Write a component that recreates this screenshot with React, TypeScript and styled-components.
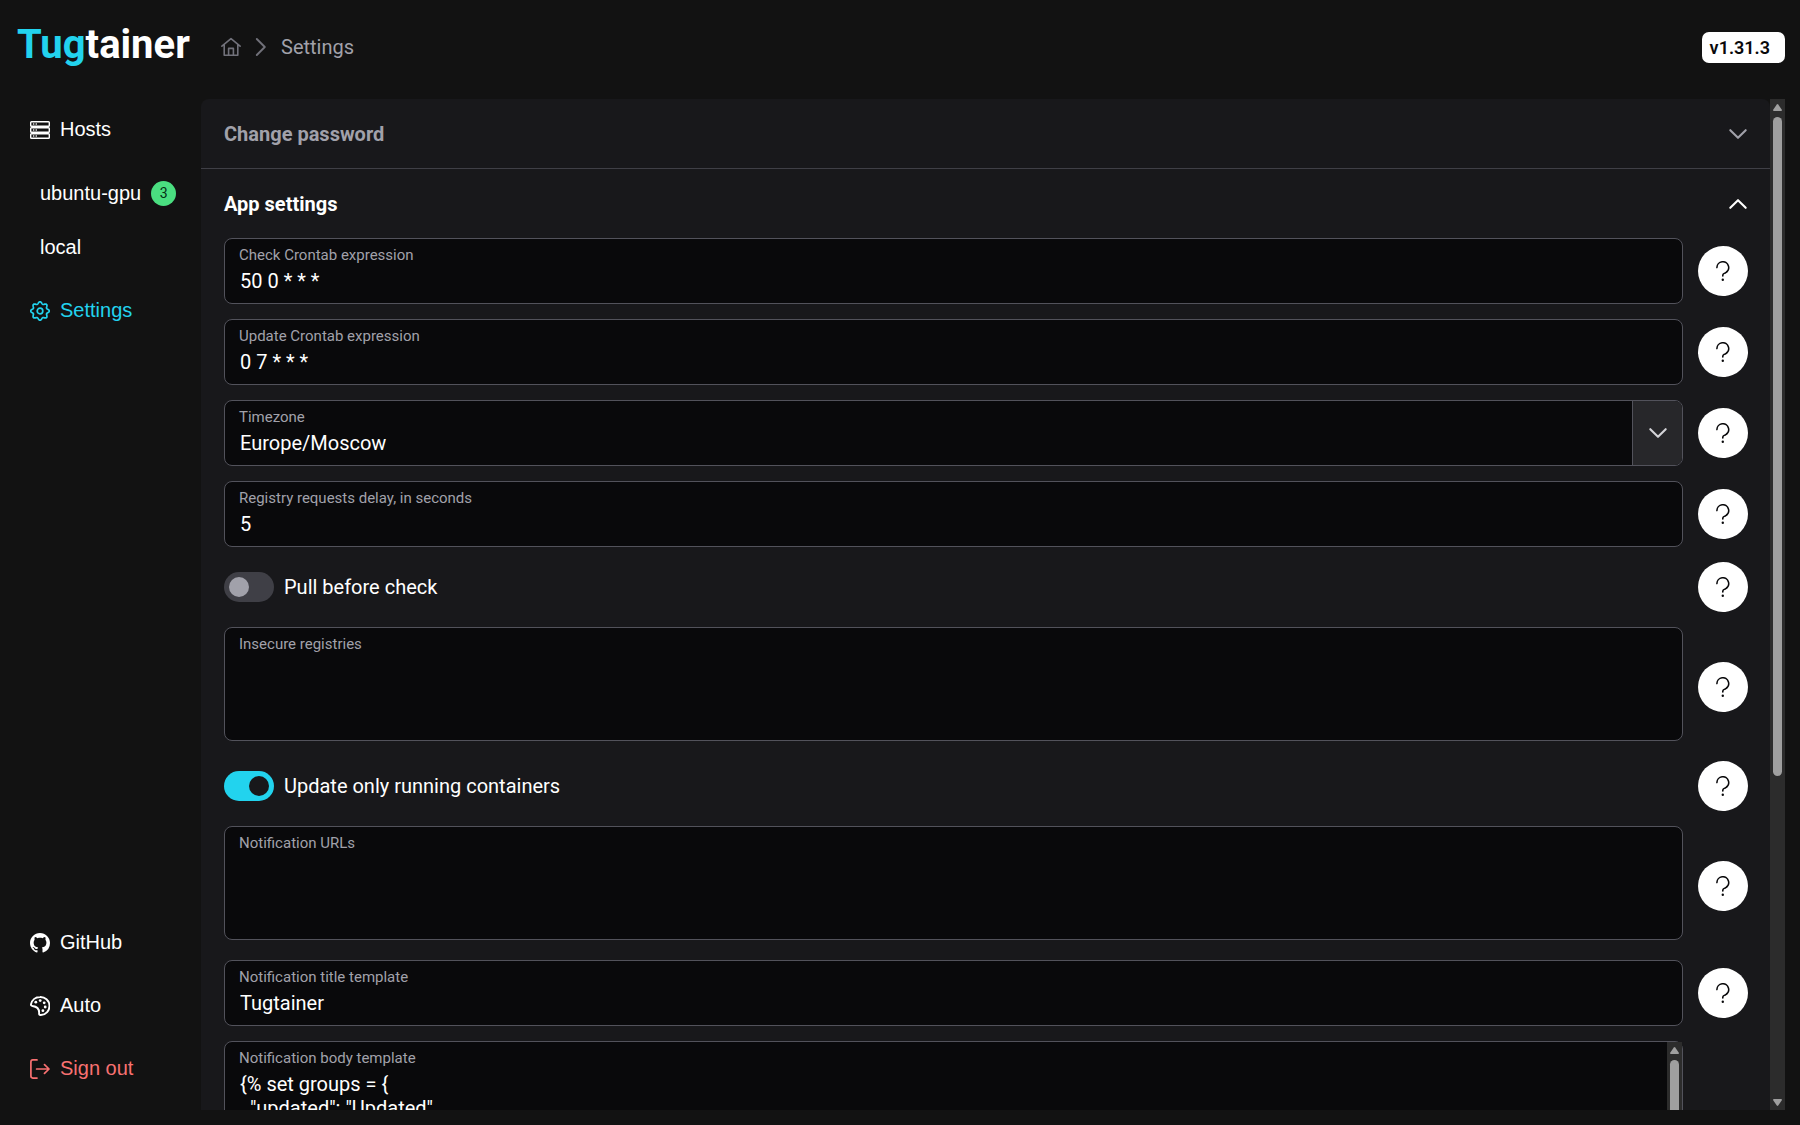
import React, { useId, useState } from "react";
import styled, { createGlobalStyle, css } from "styled-components";
import { BsGithub } from "react-icons/bs";

const color = {
  page: "#121212",
  panel: "#18181b",
  field: "#09090b",
  fieldBorder: "#52525b",
  divider: "#3f3f46",
  raised: "#27272a",
  text: "#ffffff",
  muted: "#a1a1aa",
  crumb: "#71717a",
  primary: "#22d3ee",
  success: "#4ade80",
  danger: "#f87171",
  track: "#2c2c2c",
  thumb: "#9f9f9f",
};

const GlobalStyle = createGlobalStyle`
  *, *::before, *::after { box-sizing: border-box; }
  body {
    margin: 0;
    background: ${color.page};
    color: ${color.text};
    font-family: Roboto, "Liberation Sans", sans-serif;
    font-size: 20px;
    line-height: 24px;
  }
  button, input, select, textarea { font: inherit; color: inherit; margin: 0; }
`;

const Page = styled.div`
  display: flex;
  flex-direction: column;
  height: 100vh;
  padding: 0 15px 15px 0;
`;

const Header = styled.header`
  display: flex;
  align-items: center;
  flex: none;
  height: 99px;
  padding: 0 0 5px 17px;
`;

const Logo = styled.a`
  width: 204px;
  padding-bottom: 4px;
  font-size: 40px;
  line-height: 48px;
  font-weight: 700;
  color: ${color.text};
  text-decoration: none;
`;

const LogoAccent = styled.span`
  color: ${color.primary};
`;

const Breadcrumb = styled.nav`
  display: flex;
  align-items: center;
  gap: 10px;
  color: ${color.crumb};
`;

const CrumbLink = styled.a`
  display: flex;
  color: inherit;
`;

const CrumbText = styled.span`
  color: ${color.muted};
`;

const Version = styled.span`
  margin-left: auto;
  padding: 4px 15px 3px 8px;
  border-radius: 7px;
  background: #ffffff;
  color: #09090b;
  font-size: 18px;
  font-weight: 600;
`;

const Body = styled.div`
  display: flex;
  flex: 1;
  min-height: 0;
`;

const Sidebar = styled.aside`
  display: flex;
  flex-direction: column;
  justify-content: space-between;
  flex: none;
  width: 201px;
  padding-bottom: 9px;
  font-family: "Liberation Sans", Arial, sans-serif;
`;

const Menu = styled.ul`
  margin: 0;
  padding: 0;
  list-style: none;
`;

const SubMenu = styled(Menu)`
  padding: 4px 0 6px;
`;

const menuEntry = css`
  display: flex;
  align-items: center;
  gap: 10px;
  width: 100%;
  border: 0;
  background: none;
  text-align: left;
  text-decoration: none;
  cursor: pointer;
`;

const iconEntry = css`
  ${menuEntry}
  height: 63px;
  padding: 0 0 4px 30px;

  svg {
    flex: none;
    margin-top: 2px;
  }
`;

const MenuLink = styled.a<{ $active?: boolean }>`
  ${iconEntry}
  color: ${(p) => (p.$active ? color.primary : color.text)};
`;

const MenuButton = styled.button<{ $danger?: boolean }>`
  ${iconEntry}
  color: ${(p) => (p.$danger ? color.danger : color.text)};
`;

const SubLink = styled.a`
  ${menuEntry}
  height: 54px;
  padding-left: 40px;
  color: ${color.text};
`;

const CountBadge = styled.span`
  display: grid;
  place-items: center;
  width: 25px;
  height: 25px;
  border-radius: 50%;
  background: ${color.success};
  color: #052e16;
  font-family: Roboto, sans-serif;
  font-size: 14px;
`;

const Main = styled.main`
  display: flex;
  flex: 1;
  min-width: 0;
`;

const Scroller = styled.div`
  flex: 1;
  min-width: 0;
  overflow-y: auto;
  scrollbar-width: none;
  border-radius: 8px 8px 0 0;
  background: ${color.panel};
`;

const Section = styled.section`
  & + & {
    border-top: 1px solid ${color.divider};
  }
`;

const SectionTitle = styled.h2`
  margin: 0;
  font-size: 20px;
`;

const SectionToggle = styled.button<{ $open: boolean }>`
  display: flex;
  align-items: center;
  justify-content: space-between;
  width: 100%;
  height: 69px;
  padding: 0 22px 0 23px;
  border: 0;
  background: none;
  color: ${(p) => (p.$open ? color.text : color.muted)};
  font-weight: 700;
  cursor: pointer;
`;

const Form = styled.form`
  display: flex;
  flex-direction: column;
  gap: 15px;
  padding: 0 22px 22px 23px;
`;

const Row = styled.div`
  display: flex;
  align-items: center;
  gap: 15px;
`;

const Field = styled.div<{ $multiline?: boolean }>`
  position: relative;
  display: flex;
  flex: 1;
  min-width: 0;
  padding-bottom: ${(p) => (p.$multiline ? 5 : 0)}px;
`;

const FieldLabel = styled.label`
  position: absolute;
  top: 8px;
  left: 15px;
  font-size: 15px;
  line-height: 18px;
  color: ${color.muted};
`;

const control = css`
  display: block;
  width: 100%;
  padding: 30px 15px 10px;
  border: 1px solid ${color.fieldBorder};
  border-radius: 8px;
  outline: 0;
  background: ${color.field};
  line-height: 24px;
`;

const TextInput = styled.input`
  ${control}
  height: 66px;
`;

const TextArea = styled.textarea`
  ${control}
  resize: none;
  overflow: hidden;
`;

const Select = styled.select`
  ${control}
  height: 66px;
  appearance: none;
`;

const SelectTrigger = styled.span`
  position: absolute;
  top: 1px;
  right: 1px;
  bottom: 1px;
  display: grid;
  place-items: center;
  width: 50px;
  border-left: 1px solid ${color.fieldBorder};
  border-radius: 0 7px 7px 0;
  background: ${color.raised};
  color: #d4d4d8;
  pointer-events: none;
`;

const EditorBox = styled.div`
  position: relative;
  display: flex;
  flex: 1;
  min-width: 0;
  border: 1px solid ${color.fieldBorder};
  border-radius: 8px;
  background: ${color.field};

  ${TextArea} {
    border: 0;
    background: none;
  }
  ${FieldLabel} {
    top: 7px;
    left: 14px;
  }
`;

const HelpButton = styled.button`
  display: grid;
  place-items: center;
  flex: none;
  width: 50px;
  height: 50px;
  padding: 0;
  border: 0;
  border-radius: 50%;
  background: #ffffff;
  color: #09090b;
  cursor: pointer;
`;

const HelpSpacer = styled.div`
  flex: none;
  width: 50px;
`;

const SwitchField = styled.label`
  display: flex;
  align-items: center;
  gap: 10px;
  flex: 1;
  cursor: pointer;
`;

const Switch = styled.input`
  appearance: none;
  display: flex;
  align-items: center;
  width: 50px;
  height: 30px;
  padding: 5px;
  border-radius: 15px;
  background: ${color.divider};

  &::before {
    content: "";
    width: 20px;
    height: 20px;
    border-radius: 50%;
    background: ${color.muted};
  }
  &:checked {
    justify-content: flex-end;
    background: ${color.primary};
  }
  &:checked::before {
    background: ${color.panel};
  }
`;

const ScrollBar = styled.div`
  display: flex;
  flex-direction: column;
  align-items: center;
  justify-content: space-between;
  flex: none;
  width: 15px;
  padding: 5px 0 4px;
  background: ${color.track};
`;

const ScrollTrack = styled.div`
  flex: 1;
  width: 9px;
  margin: 6px 0;
`;

const ScrollThumb = styled.div<{ $share: number }>`
  height: ${(p) => p.$share}%;
  border-radius: 5px;
  background: ${color.thumb};
`;

const svgBase = {
  fill: "none",
  stroke: "currentColor",
  strokeLinecap: "round",
  strokeLinejoin: "round",
  "aria-hidden": true,
} as const;

const HomeIcon = () => (
  <svg width="20" height="20" viewBox="0 0 20 20" strokeWidth="1.6" {...svgBase}>
    <path d="M.9 9.2 10 1.6l9.1 7.6M3.2 7.6v10.6h13.6V7.6M7.6 18v-6.6h4.8V18" />
  </svg>
);

const CrumbChevron = () => (
  <svg width="20" height="20" viewBox="0 0 20 20" strokeWidth="1.9" {...svgBase}>
    <path d="m5.8 2 8 8-8 8" />
  </svg>
);

const Chevron = ({ up = false }: { up?: boolean }) => (
  <svg width="20" height="20" viewBox="0 0 20 20" strokeWidth="2.1" {...svgBase}>
    <path d={up ? "m2.3 13.8 7.7-7.6 7.7 7.6" : "m2.3 6.2 7.7 7.6 7.7-7.6"} />
  </svg>
);

const HelpIcon = () => (
  <svg width="20" height="20" viewBox="0 0 20 20" strokeWidth="1.6" {...svgBase}>
    <path d="M3.9 6.6a5.9 5.9 0 1 1 8.2 5.5c-1.5.5-2.3.9-2.3 2V15" />
    <circle cx="9.8" cy="18.8" r="1.2" fill="currentColor" stroke="none" />
  </svg>
);

const HostsIcon = () => (
  <svg width="20" height="20" viewBox="0 0 20 20" {...svgBase}>
    <g strokeWidth="1.4">
      <rect x=".7" y="1.7" width="18.6" height="4.6" rx=".8" />
      <rect x=".7" y="7.7" width="18.6" height="4.6" rx=".8" />
      <rect x=".7" y="13.7" width="18.6" height="4.6" rx=".8" />
    </g>
    <path strokeWidth="1.6" d="M3.6 4h.1M6.2 4h.1M3.6 10h.1M6.2 10h.1M3.6 16h.1M6.2 16h.1" />
  </svg>
);

const gearOutline = Array.from({ length: 96 }, (_, i) => {
  const angle = (i / 96) * Math.PI * 2;
  const radius = 8.2 + 1.1 * Math.cos(8 * angle);
  return `${(10 + radius * Math.cos(angle)).toFixed(2)},${(10 + radius * Math.sin(angle)).toFixed(2)}`;
}).join(" ");

const GearIcon = () => (
  <svg width="20" height="20" viewBox="0 0 20 20" strokeWidth="1.7" {...svgBase}>
    <polygon points={gearOutline} />
    <circle cx="10" cy="10" r="2.8" />
  </svg>
);

const PaletteIcon = () => (
  <svg width="20" height="20" viewBox="0 0 20 20" strokeWidth="1.9" {...svgBase}>
    <path d="M1 8.2C2 3.900 5.600 1 10 1a9 9 0 0 1 .9 18c-1.600.2-1.900-.4-1.800-1.800.3-4.300-2.200-6.600-6.600-7.200C1.300 9.800.8 9.300 1 8.200z" />
    <g fill="currentColor" stroke="none">
      <circle cx="5.8" cy="6.2" r="1.4" />
      <circle cx="10.200" cy="4.600" r="1.400" />
      <circle cx="14.200" cy="6.800" r="1.400" />
      <circle cx="15.200" cy="11" r="1.400" />
      <circle cx="12.900" cy="14.700" r="1.400" />
    </g>
  </svg>
);

const SignOutIcon = () => (
  <svg width="20" height="20" viewBox="0 0 20 20" strokeWidth="1.7" {...svgBase}>
    <path d="M7 .9H2.800A2 2 0 0 0 .9 2.900v14.200a2 2 0 0 0 1.900 2H7M6.600 10h12.300M14.500 5.600l4.500 4.400-4.500 4.400" />
  </svg>
);

const ArrowTip = ({ down = false }: { down?: boolean }) => (
  <svg width="9" height="7" viewBox="0 0 9 7" fill={color.thumb} aria-hidden>
    <path d={down ? "M0 1Q0 0 1 0h7q1 0 1 1L5.2 6.5q-.7.8-1.4 0z" : "M0 6q0 1 1 1h7q1 0 1-1L5.2.5q-.7-.8-1.4 0z"} />
  </svg>
);

const Bar = ({ share }: { share: number }) => (
  <ScrollBar aria-hidden>
    <ArrowTip />
    <ScrollTrack>
      <ScrollThumb $share={share} />
    </ScrollTrack>
    <ArrowTip down />
  </ScrollBar>
);

const Help = ({ topic }: { topic: string }) => (
  <HelpButton type="button" aria-label={`Help: ${topic}`}>
    <HelpIcon />
  </HelpButton>
);

const InputRow = ({ label, value }: { label: string; value: string }) => {
  const id = useId();
  return (
    <Row>
      <Field>
        <TextInput id={id} defaultValue={value} />
        <FieldLabel htmlFor={id}>{label}</FieldLabel>
      </Field>
      <Help topic={label} />
    </Row>
  );
};

const SelectRow = ({ label, options }: { label: string; options: string[] }) => {
  const id = useId();
  return (
    <Row>
      <Field>
        <Select id={id}>
          {options.map((o) => (
            <option key={o}>{o}</option>
          ))}
        </Select>
        <FieldLabel htmlFor={id}>{label}</FieldLabel>
        <SelectTrigger>
          <Chevron />
        </SelectTrigger>
      </Field>
      <Help topic={label} />
    </Row>
  );
};

const AreaRow = ({ label }: { label: string }) => {
  const id = useId();
  return (
    <Row>
      <Field $multiline>
        <TextArea id={id} rows={3} />
        <FieldLabel htmlFor={id}>{label}</FieldLabel>
      </Field>
      <Help topic={label} />
    </Row>
  );
};

const SwitchRow = ({ label, on }: { label: string; on?: boolean }) => (
  <Row>
    <SwitchField>
      <Switch type="checkbox" role="switch" defaultChecked={on} />
      {label}
    </SwitchField>
    <Help topic={label} />
  </Row>
);

const EditorRow = ({ label, value }: { label: string; value: string }) => {
  const id = useId();
  return (
    <Row>
      <EditorBox>
        <TextArea id={id} rows={8} defaultValue={value} />
        <FieldLabel htmlFor={id}>{label}</FieldLabel>
        <Bar share={70} />
      </EditorBox>
      <HelpSpacer />
    </Row>
  );
};

const bodyTemplate = `{% set groups = {
  "updated": "Updated"
} %}`;

export default function App() {
  const [open, setOpen] = useState(true);
  return (
    <>
      <GlobalStyle />
      <Page>
        <Header>
          <Logo href="#">
            <LogoAccent>Tug</LogoAccent>tainer
          </Logo>
          <Breadcrumb aria-label="Breadcrumb">
            <CrumbLink href="#" aria-label="Home">
              <HomeIcon />
            </CrumbLink>
            <CrumbChevron />
            <CrumbText>Settings</CrumbText>
          </Breadcrumb>
          <Version>v1.31.3</Version>
        </Header>
        <Body>
          <Sidebar>
            <Menu>
              <li>
                <MenuLink href="#hosts">
                  <HostsIcon />
                  Hosts
                </MenuLink>
                <SubMenu>
                  <li>
                    <SubLink href="#ubuntu-gpu">
                      ubuntu-gpu
                      <CountBadge>3</CountBadge>
                    </SubLink>
                  </li>
                  <li>
                    <SubLink href="#local">local</SubLink>
                  </li>
                </SubMenu>
              </li>
              <li>
                <MenuLink href="#settings" $active>
                  <GearIcon />
                  Settings
                </MenuLink>
              </li>
            </Menu>
            <Menu>
              <li>
                <MenuLink href="#github">
                  <BsGithub size={20} aria-hidden />
                  GitHub
                </MenuLink>
              </li>
              <li>
                <MenuButton type="button">
                  <PaletteIcon />
                  Auto
                </MenuButton>
              </li>
              <li>
                <MenuButton type="button" $danger>
                  <SignOutIcon />
                  Sign out
                </MenuButton>
              </li>
            </Menu>
          </Sidebar>
          <Main>
            <Scroller>
              <Section>
                <SectionTitle>
                  <SectionToggle type="button" $open={false} aria-expanded={false}>
                    Change password
                    <Chevron />
                  </SectionToggle>
                </SectionTitle>
              </Section>
              <Section>
                <SectionTitle>
                  <SectionToggle type="button" $open={open} aria-expanded={open} onClick={() => setOpen(!open)}>
                    App settings
                    <Chevron up={open} />
                  </SectionToggle>
                </SectionTitle>
                {open && (
                  <Form>
                    <InputRow label="Check Crontab expression" value="50 0 * * *" />
                    <InputRow label="Update Crontab expression" value="0 7 * * *" />
                    <SelectRow label="Timezone" options={["Europe/Moscow"]} />
                    <InputRow label="Registry requests delay, in seconds" value="5" />
                    <SwitchRow label="Pull before check" />
                    <AreaRow label="Insecure registries" />
                    <SwitchRow label="Update only running containers" on />
                    <AreaRow label="Notification URLs" />
                    <InputRow label="Notification title template" value="Tugtainer" />
                    <EditorRow label="Notification body template" value={bodyTemplate} />
                  </Form>
                )}
              </Section>
            </Scroller>
            <Bar share={67.5} />
          </Main>
        </Body>
      </Page>
    </>
  );
}
